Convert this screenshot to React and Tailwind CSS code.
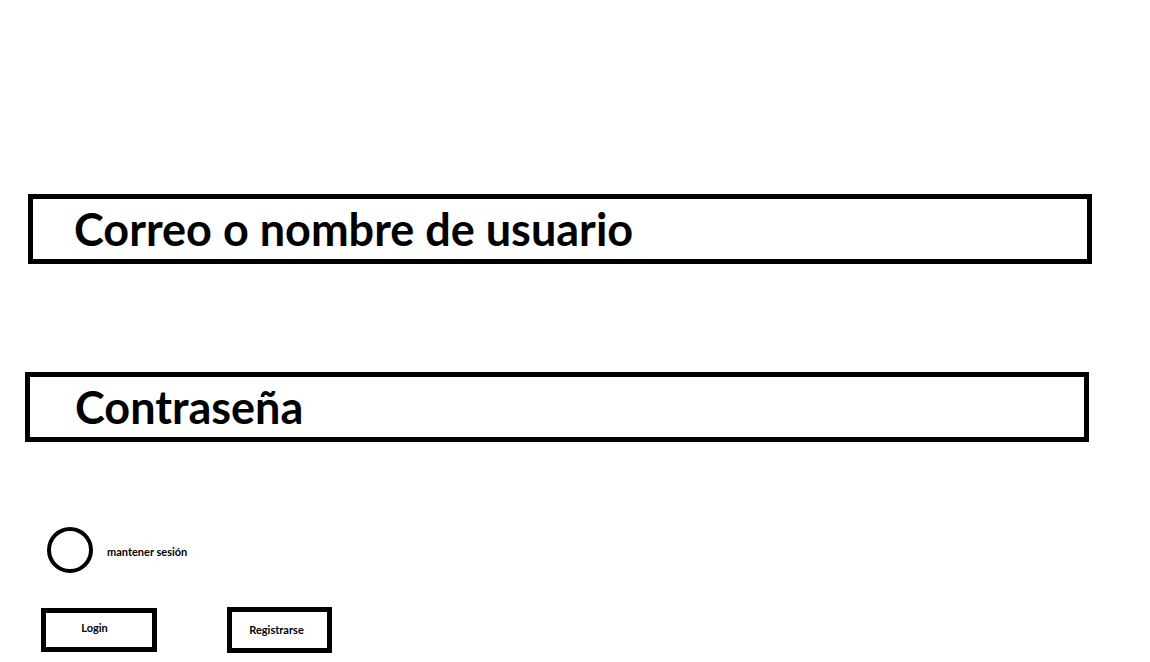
const Field = ({ label, className }) => (
    <div className={`flex items-center h-[70px] w-[1064px] border-[5px] border-black ${className}`}>
        <span className="text-[45px] font-bold leading-none text-black">{label}</span>
    </div>
);

export default function App() {
    return (
        <div className="w-[1150px] h-[662px] bg-white overflow-hidden font-['Lato',sans-serif] text-black">
            <Field label="Correo o nombre de usuario" className="ml-[28px] mt-[194px] pl-[41px]" />
            <Field label="Contraseña" className="ml-[25px] mt-[108px] pl-[45px]" />

            {/* mantener sesión */}
            <div className="flex items-center ml-[47px] mt-[85px]">
                <div className="w-[46px] h-[46px] rounded-full border-[4px] border-black" />
                <span className="ml-[14px] mt-[4px] text-[11px] font-bold">mantener sesión</span>
            </div>

            {/* buttons */}
            <div className="flex items-start ml-[41px] mt-[34px]">
                <button type="button" className="w-[116px] h-[44px] mt-[1px] border-[5px] border-black flex items-center justify-center text-[11px] font-bold pr-[9px] pb-[4px]">
                    Login
                </button>
                <button type="button" className="w-[105px] h-[46px] ml-[70px] border-[5px] border-black flex items-center justify-center text-[11px] font-bold pr-[6px]">
                    Registrarse
                </button>
            </div>
        </div>
    );
}
